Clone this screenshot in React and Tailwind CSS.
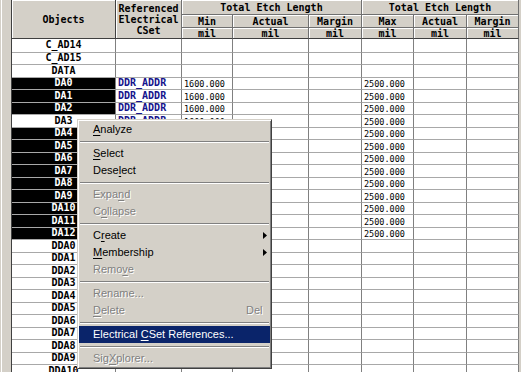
import React from "react";

const mono = { fontFamily: '"DejaVu Sans Mono", "Liberation Mono", monospace' };

const names = [
  "C_AD14", "C_AD15", "DATA",
  "DA0", "DA1", "DA2", "DA3", "DA4", "DA5", "DA6", "DA7", "DA8", "DA9", "DA10", "DA11", "DA12",
  "DDA0", "DDA1", "DDA2", "DDA3", "DDA4", "DDA5", "DDA6", "DDA7", "DDA8", "DDA9", "DDA10",
];

const hdr = "bg-[#d4d0c8] border-r border-b border-[#707070] shadow-[inset_1px_1px_0_#ffffff] flex items-center justify-center font-bold text-[10px] leading-[11px] text-black";

function Header() {
  return (
    <div className="grid grid-cols-[104px_66px_51px_76px_53px_52px_53px_52px] grid-rows-[15px_13px_11px] shrink-0" style={mono}>
      <div className={`${hdr} row-span-3 border-r-[#404040] border-b-[#404040]`}>Objects</div>
      <div className={`${hdr} row-span-3 flex-col border-b-[#404040] pt-[1px]`}>
        <span>Referenced</span>
        <span>Electrical</span>
        <span>CSet</span>
      </div>
      <div className={`${hdr} col-span-3`}>Total Etch Length</div>
      <div className={`${hdr} col-span-3`}>Total Etch Length</div>
      <div className={hdr}>Min</div>
      <div className={hdr}>Actual</div>
      <div className={hdr}>Margin</div>
      <div className={hdr}>Max</div>
      <div className={hdr}>Actual</div>
      <div className={hdr}>Margin</div>
      <div className={`${hdr} border-b-[#404040]`}>mil</div>
      <div className={`${hdr} border-b-[#404040]`}>mil</div>
      <div className={`${hdr} border-b-[#404040]`}>mil</div>
      <div className={`${hdr} border-b-[#404040]`}>mil</div>
      <div className={`${hdr} border-b-[#404040]`}>mil</div>
      <div className={`${hdr} border-b-[#404040]`}>mil</div>
    </div>
  );
}

const cell = "border-r border-r-[#808080] border-b border-b-[#a8a8a8] flex items-center whitespace-nowrap";

function Row({ name, i }) {
  const isDA = /^DA\d+$/.test(name);
  const selected = isDA && name !== "DA3";
  const h = i === 0 ? "h-[14px]" : i % 2 === 1 ? "h-[12px]" : "h-[13px]";
  const val = "text-[8.5px] leading-[10px] text-black pl-[2px] pt-[1px] overflow-hidden";
  return (
    <div className={`flex ${h} shrink-0`} style={mono}>
      <div
        className={`w-[104px] ${cell} justify-center font-bold text-[10px] leading-[10px] pb-[1px] border-r-[#404040] ${
          selected ? "bg-black text-white border-b-[#5a5a5a]" : "bg-white text-black"
        }`}
      >
        {name}
      </div>
      <div className={`w-[66px] ${cell} pl-[2px] pb-[1px] font-bold text-[10px] leading-[10px] text-[#14148c]`}>
        {isDA ? "DDR_ADDR" : ""}
      </div>
      <div className={`w-[51px] ${cell} ${val}`}>{isDA ? "1600.000" : ""}</div>
      <div className={`w-[76px] ${cell}`}></div>
      <div className={`w-[53px] ${cell}`}></div>
      <div className={`w-[52px] ${cell} ${val}`}>{isDA ? "2500.000" : ""}</div>
      <div className={`w-[53px] ${cell}`}></div>
      <div className={`w-[52px] ${cell}`}></div>
    </div>
  );
}

const menu = [
  { label: "Analyze", u: 0 },
  { sep: true },
  { label: "Select", u: 0 },
  { label: "Deselect", u: 4 },
  { sep: true },
  { label: "Expand", u: 4, dis: true },
  { label: "Collapse", u: 1, dis: true },
  { sep: true },
  { label: "Create", u: 1, sub: true },
  { label: "Membership", u: 0, sub: true },
  { label: "Remove", u: 4, dis: true },
  { sep: true },
  { label: "Rename...", u: -1, dis: true },
  { label: "Delete", u: 0, dis: true, short: "Del" },
  { sep: true },
  { label: "Electrical CSet References...", u: 11, hi: true },
  { sep: true },
  { label: "SigXplorer...", u: 3, dis: true },
];

function Label({ text, u }) {
  if (u < 0) return <>{text}</>;
  return (
    <>
      {text.slice(0, u)}
      <span className="underline underline-offset-[2px]">{text[u]}</span>
      {text.slice(u + 1)}
    </>
  );
}

function Menu() {
  return (
    <div
      className="absolute left-[77px] top-[119px] w-[195px] h-[250px] bg-[#d4d0c8] border border-t-[#d4d0c8] border-l-[#d4d0c8] border-r-[#404040] border-b-[#404040] shadow-[inset_1px_1px_0_#ffffff,inset_-1px_-1px_0_#808080] p-[1px] flex flex-col"
      style={{ fontFamily: '"Liberation Sans", Arial, sans-serif' }}
    >
      {menu.map((m, k) =>
        m.sep ? (
          <div key={k} className="h-[7px] shrink-0 flex flex-col justify-center px-[1px]">
            <div className="h-[1px] bg-[#808080]" />
            <div className="h-[1px] bg-white" />
          </div>
        ) : (
          <div
            key={k}
            className={`h-[17px] shrink-0 flex items-center pl-[14px] pr-[3px] text-[11px] leading-[13px] whitespace-nowrap ${
              m.hi ? "bg-[#0a246a] text-white" : m.dis ? "text-[#808080] [text-shadow:1px_1px_0_#ffffff]" : "text-black"
            }`}
          >
            <span className="w-[153px] shrink-0">
              <Label text={m.label} u={m.u} />
            </span>
            {m.short && <span>{m.short}</span>}
            {m.sub && (
              <svg className="ml-auto" width="4" height="7" viewBox="0 0 4 7">
                <path d="M0 0 L4 3.5 L0 7 Z" fill="#000" />
              </svg>
            )}
          </div>
        )
      )}
    </div>
  );
}

export default function App() {
  return (
    <div className="relative w-[521px] h-[372px] overflow-hidden bg-white flex">
      <div className="w-[12px] h-full shrink-0 bg-[#d4d0c8] border-r border-r-[#404040] shadow-[inset_1px_0_0_#d4d0c8,inset_2px_0_0_#ffffff]" />
      <div className="flex flex-col w-[507px] shrink-0">
        <Header />
        {names.map((n, i) => (
          <Row key={n} name={n} i={i} />
        ))}
      </div>
      <div className="w-[2px] h-full shrink-0 bg-[#d4d0c8]" />
      <Menu />
    </div>
  );
}
